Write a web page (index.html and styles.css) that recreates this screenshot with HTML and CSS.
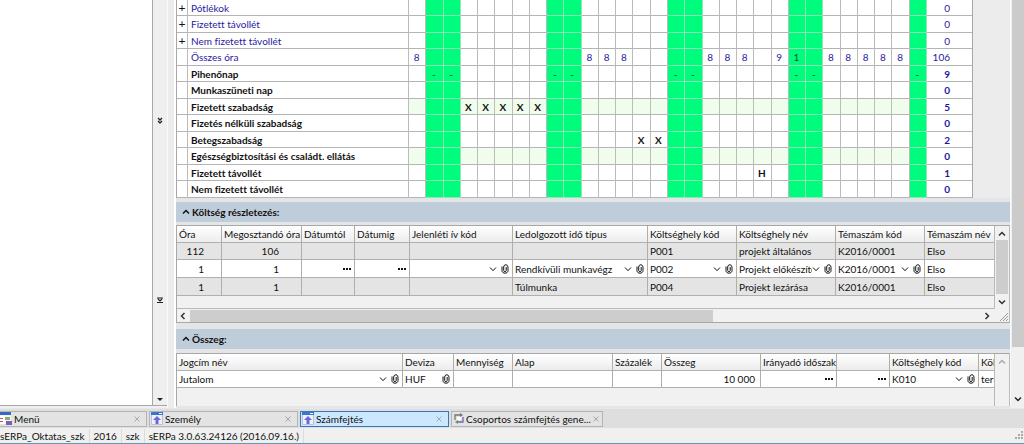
FILE: index.html
```html
<!DOCTYPE html>
<html lang="hu">
<head>
<meta charset="utf-8">
<title>sERPa 3.0.63</title>
<link rel="stylesheet" href="styles.css">
</head>
<body>
<svg class="defs" aria-hidden="true">
  <symbol id="down" viewBox="0 0 8 8"><path d="M1 2.5 4 5.7 7 2.5" fill="none" stroke="currentColor"/></symbol>
  <symbol id="downbold" viewBox="0 0 8 8"><path d="M1 2.5 4 5.5 7 2.5" fill="none" stroke="currentColor" stroke-width="1.5"/></symbol>
  <symbol id="up" viewBox="0 0 8 8"><path d="M1 5.5 4 2.5 7 5.5" fill="none" stroke="currentColor" stroke-width="1.5"/></symbol>
  <symbol id="left" viewBox="0 0 8 8"><path d="M5.5 1 2.5 4 5.5 7" fill="none" stroke="currentColor" stroke-width="1.5"/></symbol>
  <symbol id="right" viewBox="0 0 8 8"><path d="M2.5 1 5.5 4 2.5 7" fill="none" stroke="currentColor" stroke-width="1.5"/></symbol>
  <symbol id="clip" viewBox="0 0 8 10"><path d="M1 2.5v4.2C1 10 7 10 7 6.700V3.300C7 0 2.700 0 2.700 3v3.500c0 1.600 2.500 1.600 2.500 0V3" fill="none" stroke="currentColor"/></symbol>
  <symbol id="dots" viewBox="0 0 8 8"><path d="M0 3h2v2H0zM3 3h2v2H3zM6 3h2v2H6z" fill="currentColor"/></symbol>
  <symbol id="close" viewBox="0 0 8 8"><path d="M1.500 1.500l5 5M6.500 1.500l-5 5" stroke="currentColor" stroke-width=".8"/></symbol>
  <symbol id="form" viewBox="0 0 12 13"><path d="M.5.5h11v12H.5z" fill="#eef1fb" stroke="#b9c0d8"/><path d="M0 0h12v3H0z" fill="#3b74cf"/><path d="M8 1h3v1H8z" fill="#fff"/><path d="M6 4 10 8H7.500v4h-3V8H2z" fill="#6a68d4"/></symbol>
</svg>
<div class="window">
  <div class="workspace">
    <aside class="side"></aside>
    <div class="rail">
      <svg viewBox="0 0 6 8"><path d="M1 1l2 2 2-2M1 4l2 2 2-2" fill="none" stroke="#222" stroke-width="1.300"/></svg>
      <svg viewBox="0 0 6 8"><path d="M0 2h6M0 6.500h6M1 3l2 2 2-2" fill="none" stroke="#222" stroke-width="1.200"/></svg>
      <svg viewBox="0 0 6 8"><path d="M0 3h6L3 6z" fill="#222"/></svg>
    </div>
    <div class="splitter"></div>
    <main class="main">
      <div class="sheet">
        <table class="days">
          <colgroup><col class="w-exp"><col class="w-label"></colgroup>
          <colgroup span="30"></colgroup>
          <colgroup><col class="w-total"></colgroup>
          <tbody id="days"></tbody>
        </table>
      </div>

      <h2 class="bar"><svg class="i8"><use href="#up"/></svg>Költség részletezés:</h2>
      <section class="box">
        <div class="view">
          <table class="list">
            <colgroup><col class="c45"><col class="c80"><col class="c53"><col class="c55"><col class="c103"><col class="c135"><col class="c89"><col class="c99"><col class="c89"><col></colgroup>
            <thead><tr><th>Óra</th><th>Megosztandó óra</th><th>Dátumtól</th><th>Dátumig</th><th>Jelenléti ív kód</th><th>Ledolgozott idő típus</th><th>Költséghely kód</th><th>Költséghely név</th><th>Témaszám kód</th><th>Témaszám név</th></tr></thead>
            <tbody>
              <tr class="dim"><td class="num n1">112</td><td class="num n2">106</td><td></td><td></td><td></td><td></td><td>P001</td><td>projekt általános</td><td>K2016/0001</td><td>Elso</td></tr>
              <tr>
                <td class="num n1">1</td><td class="num n2">1</td>
                <td><div class="field"><input aria-label="Dátumtól"><button aria-label="Dátumtól választása"><svg class="i8"><use href="#dots"/></svg></button></div></td>
                <td><div class="field"><input aria-label="Dátumig"><button aria-label="Dátumig választása"><svg class="i8"><use href="#dots"/></svg></button></div></td>
                <td><div class="field"><select aria-label="Jelenléti ív kód"><option></option></select><svg class="i8"><use href="#down"/></svg><button aria-label="Csatolás"><svg class="clip"><use href="#clip"/></svg></button></div></td>
                <td><div class="field"><select aria-label="Ledolgozott idő típus"><option>Rendkívüli munkavégz</option></select><svg class="i8"><use href="#down"/></svg><button aria-label="Csatolás"><svg class="clip"><use href="#clip"/></svg></button></div></td>
                <td><div class="field"><select aria-label="Költséghely kód"><option>P002</option></select><svg class="i8"><use href="#down"/></svg><button aria-label="Csatolás"><svg class="clip"><use href="#clip"/></svg></button></div></td>
                <td><div class="field"><select aria-label="Költséghely név"><option>Projekt előkészíté</option></select><svg class="i8"><use href="#down"/></svg><button aria-label="Csatolás"><svg class="clip"><use href="#clip"/></svg></button></div></td>
                <td><div class="field"><select aria-label="Témaszám kód"><option>K2016/0001</option></select><svg class="i8"><use href="#down"/></svg><button aria-label="Csatolás"><svg class="clip"><use href="#clip"/></svg></button></div></td>
                <td>Elso</td>
              </tr>
              <tr class="dim"><td class="num n1">1</td><td class="num n2">1</td><td></td><td></td><td></td><td>Túlmunka</td><td>P004</td><td>Projekt lezárása</td><td>K2016/0001</td><td>Elso</td></tr>
            </tbody>
          </table>
        </div>
        <div class="vscroll"><svg class="i8"><use href="#up"/></svg><span class="thumb"></span><svg class="i8"><use href="#downbold"/></svg></div>
        <div class="hscroll"><svg class="i8"><use href="#left"/></svg><span class="track"><span class="hthumb"></span></span><svg class="i8"><use href="#right"/></svg></div>
        <svg class="grip" viewBox="0 0 14 14"><path d="M5 13 13 5M8 13l5-5M11 13l2-2" stroke="#999"/></svg>
      </section>

      <h2 class="bar second"><svg class="i8"><use href="#up"/></svg>Összeg:</h2>
      <section class="box amounts">
        <div class="view">
          <table class="list">
            <colgroup><col class="c226"><col class="c51"><col class="c59"><col class="c100"><col class="c49"><col class="c99"><col class="c76"><col class="c53"><col class="c89"><col></colgroup>
            <thead><tr><th>Jogcím név</th><th>Deviza</th><th>Mennyiség</th><th>Alap</th><th>Százalék</th><th>Összeg</th><th>Irányadó időszak</th><th></th><th>Költséghely kód</th><th>Köl</th></tr></thead>
            <tbody><tr>
              <td><div class="field"><select aria-label="Jogcím név"><option>Jutalom</option></select><svg class="i8"><use href="#down"/></svg><button aria-label="Csatolás"><svg class="clip"><use href="#clip"/></svg></button></div></td>
              <td><div class="field"><input aria-label="Deviza" value="HUF"><button aria-label="Csatolás"><svg class="clip"><use href="#clip"/></svg></button></div></td>
              <td></td><td></td><td></td><td class="num">10 000</td>
              <td><div class="field"><input aria-label="Időszak kezdete"><button aria-label="Kezdet választása"><svg class="i8"><use href="#dots"/></svg></button></div></td>
              <td><div class="field"><input aria-label="Időszak vége"><button aria-label="Vég választása"><svg class="i8"><use href="#dots"/></svg></button></div></td>
              <td><div class="field"><select aria-label="Költséghely kód"><option>K010</option></select><svg class="i8"><use href="#down"/></svg><button aria-label="Csatolás"><svg class="clip"><use href="#clip"/></svg></button></div></td>
              <td>terr</td>
            </tr></tbody>
          </table>
        </div>
        <div class="vscroll off"><svg class="i8"><use href="#up"/></svg></div>
      </section>
    </main>
    <div class="pagescroll"><span class="pagethumb"></span><svg class="i8"><use href="#downbold"/></svg></div>
  </div>

  <nav class="tabs">
    <button class="tab first"><svg class="ico" viewBox="0 0 12 13"><path d="M0 1h11v11H0z" fill="#f4f4fa"/><path d="M0 0h11v3H0z" fill="#3469c8"/><path d="M0 4h5v8H0z" fill="#fff"/><path d="M5 5h5v3H5z" fill="#8fae6e"/><path d="M6 9h6v4H6z" fill="#7b5fb5"/><path d="M0 6h3v1H0zM0 9h3v1H0z" fill="#c55"/></svg><span>Menü</span><svg class="i8 x"><use href="#close"/></svg></button>
    <button class="tab"><svg class="ico"><use href="#form"/></svg><span>Személy</span><svg class="i8 x"><use href="#close"/></svg></button>
    <button class="tab active"><svg class="ico"><use href="#form"/></svg><span>Számfejtés</span><svg class="i8 x"><use href="#close"/></svg></button>
    <button class="tab last"><svg class="ico" viewBox="0 0 12 13"><path d="M2 8V3h7" fill="none" stroke="#777" stroke-width="1.300"/><path d="M7 1l3 2-3 2z" fill="#777"/><path d="M10 5v5H4" fill="none" stroke="#7a62b4" stroke-width="1.300"/><path d="M5 8l-3 2 3 2z" fill="#5c9c60"/><path d="M4 5h4v3H4z" fill="#fff"/></svg><span>Csoportos számfejtés gene...</span><svg class="i8 x"><use href="#close"/></svg></button>
  </nav>
  <footer class="status"><span>sERPa_Oktatas_szk</span><span>2016</span><span>szk</span><span>sERPa 3.0.63.24126 (2016.09.16.)</span>
    <svg class="sizer" viewBox="0 0 9 9"><path d="M6 0h2v2H6zM3 3h2v2H3zM6 3h2v2H6zM0 6h2v2H0zM3 6h2v2H3zM6 6h2v2H6z" fill="#aaa"/></svg>
  </footer>
</div>
<script src="script.js"></script>
</body>
</html>
```
FILE: styles.css
```css
* { box-sizing: border-box; }
body { margin: 0; background: #f0f0f0; color: #111; font: 10px/14px Lato, "Open Sans", sans-serif; font-variant-ligatures: none; }
button, input, select { font: inherit; color: inherit; border: 0; padding: 0; margin: 0; background: none; border-radius: 0; }
select { appearance: none; }
.defs { position: absolute; width: 0; height: 0; }
svg { flex: none; display: block; }
.i8 { width: 8px; height: 8px; }
.clip { width: 8px; height: 10px; }

.window { display: flex; flex-direction: column; min-height: 100vh; border-bottom: 1px solid #5c9bb5; }
.workspace { flex: 1; display: flex; min-width: 0; }
.side { flex: none; width: 153px; background: #fff; border-right: 1px solid #a8a8a8; border-bottom: 1px solid #a8a8a8; margin-bottom: 2px; }
.rail { flex: none; width: 14px; margin-bottom: 2px; padding: 117px 0 2px; background: #efefef; border-bottom: 1px solid #a8a8a8; display: grid; justify-items: center; grid-template-rows: 179px 1fr auto; }
.rail svg { width: 6px; height: 8px; }
.splitter { flex: none; width: 9px; background: #ececec; border-left: 1px solid #fafafa; border-right: 2px solid #fff; }
.main { flex: 1; min-width: 0; background: #e4e5e6; display: flex; flex-direction: column; }

.sheet { padding-right: 37px; background: linear-gradient(90deg, #e2e3e4, #ececec); }
.days { width: 100%; table-layout: fixed; border-collapse: separate; border-spacing: 0; background: #fff; border-left: 1px solid #a8a8a8; border-right: 1px solid #a8a8a8; color: #2a20a0; }
.w-exp { width: 11px; }
.w-label { width: 221px; }
.w-total { width: 45px; }
.days tr { height: 17px; }
.days tr:nth-child(odd) { height: 16px; }
.days td, .days th { padding: 0; border-right: 1px solid #bcbcbc; border-bottom: 1px solid #b4b4b4; text-align: center; font-weight: normal; line-height: 14px; white-space: nowrap; }
.days td:last-child { border-right: 0; text-align: right; padding-right: 22px; }
.days td.day { padding-right: 1px; }
.days .label { text-align: left; padding-left: 3px; }
.days td.expand button { display: block; width: 10px; color: #111; font-size: 12px; line-height: 14px; }
.days .strong th, .days .strong td { font-weight: bold; color: #111; }
.days .strong td:last-child { color: #2018a0; }
.days .soft td.day { background: #f0fcec; }
.days td.rest, .days .soft td.rest, .days .strong td.rest { background: #00fc7c; border-color: #8ce8b4; font-weight: normal; color: #14502c; }

.bar { display: flex; align-items: center; gap: 2px; margin: 4px 0 3px; height: 20px; padding-left: 6px; background: #bfccda; font-size: 10px; line-height: 14px; font-weight: bold; }
.bar.second { margin: 6px 0 4px; }
.box { display: grid; grid-template-columns: minmax(0, 1fr) 14px; background: #f1f1f1; border: 1px solid #a8a8a8; border-right-color: #bbb; }
.amounts { flex: 1; border-bottom: 0; margin-bottom: 2px; }
.view { overflow: hidden; padding-bottom: 12px; border-right: 1px solid #b8b8b8; }
.list { width: 100%; table-layout: fixed; border-collapse: separate; border-spacing: 0; background: #fff; }
.c45 { width: 45px; } .c49 { width: 49px; } .c51 { width: 51px; } .c53 { width: 53px; } .c55 { width: 55px; } .c59 { width: 59px; }
.c76 { width: 76px; } .c80 { width: 80px; } .c89 { width: 89px; } .c99 { width: 99px; } .c100 { width: 100px; }
.c103 { width: 103px; } .c135 { width: 135px; } .c226 { width: 226px; }
.list tr { height: 17px; }
.list tbody tr:nth-child(n+2) { height: 18px; }
.list th, .list td { padding: 0 0 0 2px; border-right: 1px solid #b0aea8; border-bottom: 1px solid #b0b0b0; text-align: left; font-weight: normal; white-space: nowrap; overflow: hidden; line-height: 14px; }
.list th { background: linear-gradient(#fff, #ececec); }
.list th:last-child, .list td:last-child { border-right: 0; }
.list .dim td { background: #e4e4e4; }
.list td.num { text-align: right; padding-right: 5px; }
.list td.n1 { padding-right: 17px; }
.list td.n2 { padding-right: 22px; }
.field { display: flex; align-items: center; gap: 4px; height: 16px; padding-right: 3px; }
.field select + svg { margin-left: -4px; }
.field input, .field select { flex: 1; min-width: 0; width: 0; height: 16px; outline: 0; }
.vscroll { display: flex; flex-direction: column; align-items: center; justify-content: space-between; padding: 4px 0 2px; color: #333; }
.vscroll .thumb { flex: 1; width: 12px; margin: 2px 0 4px; background: #cdcdcd; }
.off { color: #aaa; }
.hscroll { display: flex; align-items: center; height: 14px; padding: 0 4px 0 2px; border-top: 1px solid #b8b8b8; color: #333; }
.track { flex: 1; display: flex; height: 12px; padding-left: 3px; }
.hthumb { width: 66%; background: #cdcdcd; }
.grip { width: 14px; height: 14px; }
.pagescroll { flex: none; width: 14px; margin-bottom: 2px; background: #f0f0f0; border-left: 1px solid #fafafa; display: flex; flex-direction: column; align-items: center; justify-content: space-between; padding-bottom: 3px; color: #222; }
.pagethumb { width: 12px; height: 86%; background: #cbcbcb; }

.tabs { display: flex; align-items: center; gap: 2px; height: 20px; background: #dedede; border-top: 1px solid #e8e8e8; }
.tab { display: flex; align-items: center; gap: 2px; width: 149px; height: 16px; padding: 0 5px 0 1px; background: #e3e3e3; border: 1px solid #b4b4b4; text-align: left; white-space: nowrap; }
.tab.first { width: 147px; padding-left: 0; border-left: 0; }
.tab.last { width: auto; gap: 1px; padding-right: 2px; }
.tab.active { background: #cce8ff; border-color: #3878b8; }
.tab span { flex: 1; }
.ico { width: 12px; height: 13px; }
.x { color: #999; }
.status { display: flex; align-items: center; height: 15px; }
.status span { padding: 0 4px; border-right: 1px solid #dcdcdc; }
.status span:first-child { padding-left: 0; }
.sizer { width: 9px; height: 9px; margin-left: auto; }
```
FILE: script.js
```js
const restDays = [2, 3, 9, 10, 16, 17, 23, 24, 30];
const fill = (days, value) => Object.fromEntries(days.map(d => [d, value]));
const rows = [
  { label: "Pótlékok", total: 0, expand: true },
  { label: "Fizetett távollét", total: 0, expand: true },
  { label: "Nem fizetett távollét", total: 0, expand: true },
  { label: "Összes óra", total: 106, marks: { ...fill([1, 11, 12, 13, 18, 19, 20, 25, 26, 27, 28, 29], "8"), 22: "9", 23: "1" } },
  { label: "Pihenőnap", total: 9, strong: true, marks: fill(restDays, "-") },
  { label: "Munkaszüneti nap", total: 0, strong: true },
  { label: "Fizetett szabadság", total: 5, strong: true, soft: true, marks: fill([4, 5, 6, 7, 8], "X") },
  { label: "Fizetés nélküli szabadság", total: 0, strong: true },
  { label: "Betegszabadság", total: 2, strong: true, marks: fill([14, 15], "X") },
  { label: "Egészségbiztosítási és családt. ellátás", total: 0, strong: true, soft: true },
  { label: "Fizetett távollét", total: 1, strong: true, marks: { 21: "H" } },
  { label: "Nem fizetett távollét", total: 0, strong: true }
];
const body = document.getElementById("days");
for (const row of rows) {
  const tr = body.insertRow();
  if (row.strong) tr.classList.add("strong");
  if (row.soft) tr.classList.add("soft");
  const first = tr.insertCell();
  first.className = "expand";
  if (row.expand) {
    const button = document.createElement("button");
    button.textContent = "+";
    first.append(button);
  }
  const label = document.createElement("th");
  label.scope = "row";
  label.className = "label";
  label.textContent = row.label;
  tr.append(label);
  for (let day = 1; day <= 30; day++) {
    const cell = tr.insertCell();
    cell.className = restDays.includes(day) ? "day rest" : "day";
    cell.textContent = row.marks?.[day] ?? "";
  }
  tr.insertCell().textContent = row.total;
}
```
